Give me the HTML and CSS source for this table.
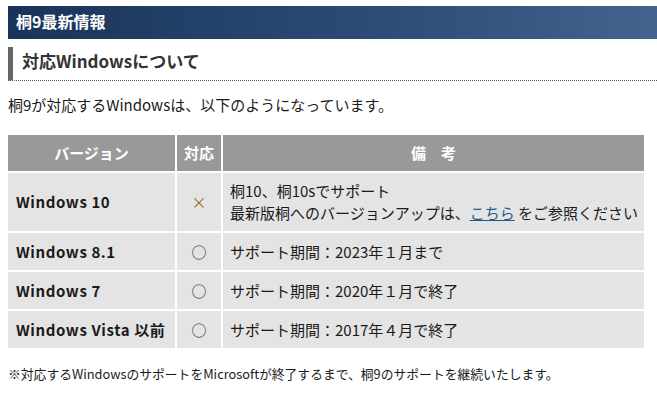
FILE: index.html
```html
<!DOCTYPE html>
<html lang="ja">
<head>
<meta charset="utf-8">
<title>桐9最新情報</title>
<link rel="stylesheet" href="styles.css">
</head>
<body>
<div class="page">
  <h2 class="bar">桐9最新情報</h2>
  <h3 class="sub">対応Windowsについて</h3>
  <p class="lead">桐9が対応するWindowsは、以下のようになっています。</p>
  <table class="os">
    <colgroup>
      <col class="w-ver">
      <col class="w-ok">
      <col>
    </colgroup>
    <thead>
      <tr>
        <th>バージョン</th>
        <th>対応</th>
        <th>備　考</th>
      </tr>
    </thead>
    <tbody>
      <tr class="tall">
        <td class="name">Windows 10</td>
        <td class="mark x">×</td>
        <td class="note">桐10、桐10sでサポート<br>最新版桐へのバージョンアップは、<a href="#">こちら</a> をご参照ください</td>
      </tr>
      <tr>
        <td class="name">Windows 8.1</td>
        <td class="mark">○</td>
        <td class="note">サポート期間：2023年１月まで</td>
      </tr>
      <tr>
        <td class="name">Windows 7</td>
        <td class="mark">○</td>
        <td class="note">サポート期間：2020年１月で終了</td>
      </tr>
      <tr>
        <td class="name">Windows Vista 以前</td>
        <td class="mark">○</td>
        <td class="note">サポート期間：2017年４月で終了</td>
      </tr>
    </tbody>
  </table>
  <p class="foot">※対応するWindowsのサポートをMicrosoftが終了するまで、桐9のサポートを継続いたします。</p>
</div>
</body>
</html>
```

FILE: styles.css
```css
html, body {
  margin: 0;
  padding: 0;
  background: #fff;
  overflow: hidden;
}
body {
  font-family: "Noto Sans CJK JP", sans-serif;
  color: #1a1a1a;
  font-size: 15px;
}
.page {
  padding: 6px 0 0 8px;
}
.bar {
  margin: 0;
  height: 33px;
  line-height: 30px;
  padding: 0 8px;
  font-size: 16px;
  font-weight: bold;
  color: #fff;
  background: linear-gradient(to right, #19345a 0%, #2e4d77 60%, #42648f 100%);
}
.sub {
  margin: 8px 0 0 0;
  height: 33px;
  line-height: 28px;
  border-left: 5px solid #666;
  border-bottom: 1px dotted #555;
  padding: 0 0 0 9px;
  font-size: 17px;
  font-weight: bold;
  color: #333;
}
.lead {
  margin: 13px 0 0 0;
  line-height: 22px;
}
.os {
  margin: 17px 0 0 -2px;
  width: 640px;
  table-layout: fixed;
  border-collapse: separate;
  border-spacing: 2px;
}
.w-ver { width: 167px; }
.w-ok { width: 44px; }
.os th {
  background: #999;
  color: #fff;
  font-weight: bold;
  font-size: 15px;
  line-height: 20px;
  padding: 8px 0;
  text-align: center;
}
.os td {
  background: #e4e4e4;
  line-height: 21px;
  padding: 8px 8px;
}
.os td.name {
  font-weight: bold;
  letter-spacing: 0.6px;
}
.os td.mark {
  text-align: center;
  padding-left: 0;
  padding-right: 0;
  color: #333;
}
.os td.mark.x {
  color: #9a6414;
}
.os td.note {
  padding-left: 7px;
  padding-right: 4px;
}
.os tr.tall td {
  line-height: 22px;
  padding-top: 7px;
  padding-bottom: 7px;
}
.os a {
  color: #1e5a8c;
  text-decoration: underline;
}
.foot {
  margin: 15px 0 0 0;
  font-size: 12.8px;
  line-height: 18px;
}
```
